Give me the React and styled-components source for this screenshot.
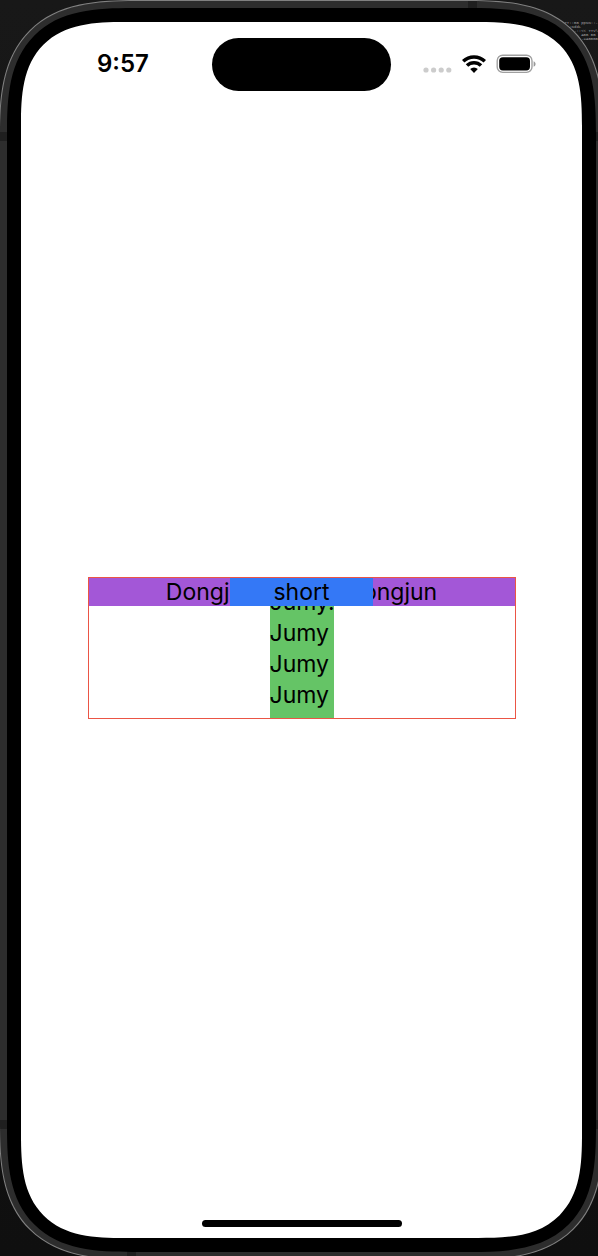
import React from "react";
import styled, { createGlobalStyle } from "styled-components";

const GlobalStyle = createGlobalStyle`
  *, *::before, *::after { box-sizing: border-box; }
  body {
    margin: 0;
    background: #121212;
    color: #000;
    font-family: Inter, "Liberation Sans", sans-serif;
  }
`;

const Desktop = styled.div`
  position: relative;
  display: grid;
  min-height: 100vh;
  overflow: hidden;
  background: linear-gradient(#181818, #0f0f0f);
`;

const Console = styled.pre`
  position: absolute;
  top: 21px;
  right: 0;
  margin: 0;
  color: #a0a0a0;
  font: 4px/4px "Liberation Mono", monospace;
  text-align: right;
`;

const rounded = (plain, smooth) => `
  border-radius: ${plain}px;
  @supports (corner-shape: superellipse(1.5)) {
    border-radius: ${smooth}px;
    corner-shape: superellipse(1.5);
  }
`;

const Chassis = styled.div`
  position: relative;
  display: grid;
  margin: 0 -6px -4px -1px;
  padding: 7px;
  border: 1px solid #808080;
  background:
    linear-gradient(#1f1f1f, #1f1f1f) 0 131px / 100% 9px no-repeat,
    linear-gradient(#1f1f1f, #1f1f1f) 0 calc(100% - 130px) / 100% 9px no-repeat,
    linear-gradient(#1f1f1f, #1f1f1f) calc(100% - 126px) 0 / 9px 50% no-repeat,
    linear-gradient(#1f1f1f, #1f1f1f) 127px 100% / 9px 50% no-repeat,
    #2d2d2d;
  ${rounded(104, 140)}
`;

const Bezel = styled.div`
  display: grid;
  padding: 14px;
  background: #000;
  ${rounded(94, 126)}
`;

const Screen = styled.div`
  display: flex;
  flex-direction: column;
  background: #fff;
  overflow: hidden;
  ${rounded(80, 104)}
`;

const StatusBar = styled.header`
  display: grid;
  grid-template-columns: 1fr 179px 1fr;
  align-items: center;
  height: 84px;
`;

const Time = styled.time`
  padding-left: 76px;
  font-size: 24px;
  line-height: 28px;
  font-weight: 600;
`;

const Island = styled.div`
  height: 53px;
  border-radius: 27px;
  background: #000;
`;

const Indicators = styled.div`
  display: flex;
  justify-content: flex-end;
  align-items: center;
  gap: 10px;
  padding-right: 46px;
`;

const Content = styled.main`
  flex: 1;
  display: flex;
  align-items: center;
  justify-content: center;
`;

const HomeArea = styled.footer`
  display: flex;
  align-items: flex-end;
  justify-content: center;
  height: 48px;
  padding-bottom: 11px;
`;

const HomeIndicator = styled.div`
  width: 200px;
  height: 7px;
  border-radius: 4px;
  background: #000;
`;

const Stack = styled.section`
  display: grid;
  grid-template-rows: 28px 1fr;
  justify-items: center;
  width: 428px;
  height: 142px;
  border: 1px solid #eb5545;
  font-size: 23px;
  line-height: 31px;
`;

const Column = styled.div`
  grid-area: 1 / 1 / 3 / 2;
  display: flex;
  flex-direction: column;
  justify-content: center;
  width: 64px;
  padding-top: 2px;
  background: #65c466;
`;

const Bar = styled.div`
  grid-area: 1 / 1;
  width: ${(p) => p.$width};
  background: ${(p) => p.$color};
  line-height: 28px;
  text-align: center;
  white-space: nowrap;
`;

const SignalIcon = () => (
  <svg width="29" height="20" viewBox="0 0 29 20" aria-label="No signal" fill="#ccc">
    {[3, 10.6, 18.2, 25.8].map((x) => (
      <circle key={x} cx={x} cy="16" r="2.6" />
    ))}
  </svg>
);

const WifiIcon = () => (
  <svg width="24" height="18" viewBox="0 0 24 18" aria-label="Wi-Fi">
    <g fill="none" stroke="#000" strokeWidth="3.5">
      <path d="M1.2 6.3a15.4 15.4 0 0 1 21.6 0" />
      <path d="M5 10.6a9.9 9.9 0 0 1 14 0" />
    </g>
    <path d="M8.2 14a5.5 5.5 0 0 1 7.6 0L12 17.9z" />
  </svg>
);

const BatteryIcon = () => (
  <svg width="40" height="20" viewBox="0 0 40 20" aria-label="Battery full">
    <rect x="1.2" y="1.2" width="34.8" height="17.2" rx="5.5" fill="none" stroke="#a0a0a0" strokeWidth="1.4" />
    <rect x="3.2" y="3.2" width="30.8" height="13.2" rx="3.6" />
    <path d="M37.6 7.2c2.6 1 2.6 4.600 0 5.600z" fill="#999" />
  </svg>
);

export default function App() {
  return (
    <>
      <GlobalStyle />
      <Desktop>
        <Console aria-hidden="true">{"-NTT::BB ppNN::-\n:NddL       \n-::<< TTV\\\nABB BB \n-=ABBBB"}</Console>
        <Chassis>
          <Bezel>
            <Screen>
              <StatusBar>
                <Time>9:57</Time>
                <Island />
                <Indicators>
                  <SignalIcon />
                  <WifiIcon />
                  <BatteryIcon />
                </Indicators>
              </StatusBar>
              <Content>
                <Stack>
                  <Column>
                    <span>Jumy.</span>
                    <span>Jumy</span>
                    <span>Jumy</span>
                    <span>Jumy</span>
                  </Column>
                  <Bar $width="100%" $color="#a357d7">Dongjun Donjun Dongjun</Bar>
                  <Bar $width="143px" $color="#3478f6">short</Bar>
                </Stack>
              </Content>
              <HomeArea>
                <HomeIndicator />
              </HomeArea>
            </Screen>
          </Bezel>
        </Chassis>
      </Desktop>
    </>
  );
}
